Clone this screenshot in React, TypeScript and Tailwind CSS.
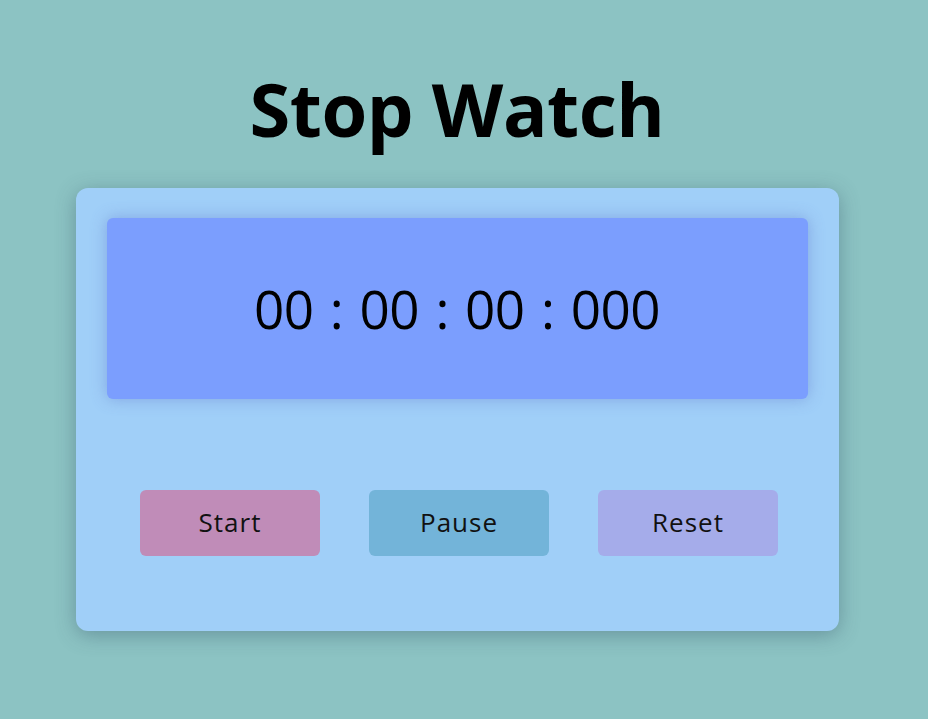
export default function App() {
  const buttons = [
    { label: "Start", cls: "bg-[#c08cb8]" },
    { label: "Pause", cls: "bg-[#73b4d9]" },
    { label: "Reset", cls: "bg-[#a5acea]" },
  ];

  return (
    <main
      className="min-h-screen w-full bg-[#8cc3c3] flex flex-col items-center pr-[14px] text-black"
      style={{ fontFamily: '"Open Sans", "Noto Sans", sans-serif' }}
    >
      <h1 className="mt-[60px] text-[74px] leading-[98px] font-bold tracking-[-0.5px]">Stop Watch</h1>
      <section className="mt-[30px] w-[763px] h-[443px] rounded-xl bg-[#a0cff8] shadow-[0_4px_20px_rgba(60,90,110,0.45)] px-[31px] pt-[30px]">
        <div className="h-[181px] rounded-md bg-[#7b9efe] shadow-[0_0_16px_rgba(90,110,200,0.45)] flex items-center justify-center">
          <span className="text-[53px] leading-none tracking-[-0.5px] [word-spacing:3px]">00 : 00 : 00 : 000</span>
        </div>
        <div className="mt-[91px] pl-[4px] flex justify-center gap-[49px]">
          {buttons.map((b) => (
            <button
              key={b.label}
              className={`w-[180px] h-[66px] rounded-md ${b.cls} text-[26px] leading-none pb-[3px] tracking-[1px] text-[#111]`}
            >
              {b.label}
            </button>
          ))}
        </div>
      </section>
    </main>
  );
}
